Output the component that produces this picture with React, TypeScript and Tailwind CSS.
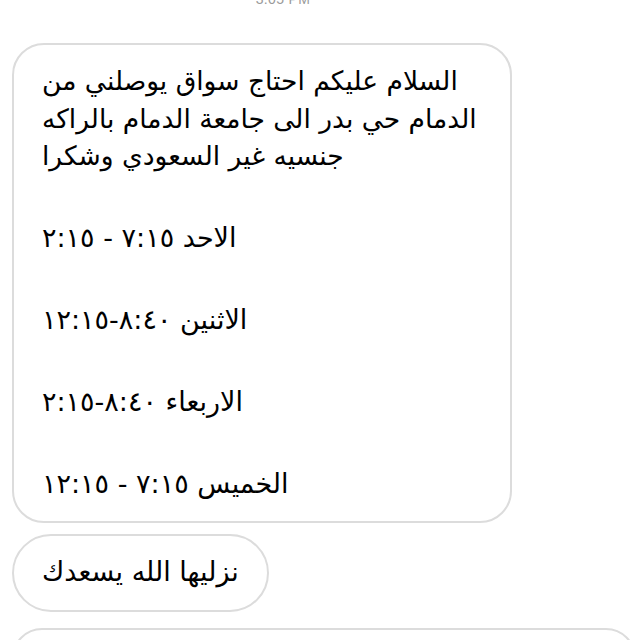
export default function App() {
  const schedule = [
    "الاحد ٧:١٥ - ٢:١٥",
    "الاثنين ٨:٤٠-١٢:١٥",
    "الاربعاء ٨:٤٠-٢:١٥",
    "الخميس ٧:١٥ - ١٢:١٥",
  ];

  return (
    <div className="w-[640px] h-[640px] overflow-hidden bg-white text-black font-['DejaVu_Sans',sans-serif]">
      {/* timestamp, mostly scrolled off the top */}
      <div className="h-[43px] flex justify-center">
        <span className="-mt-[11px] pr-[74px] text-[14px] text-[#9a9a9a] font-['Liberation_Sans',sans-serif] tracking-wide">
          3:05 PM
        </span>
      </div>

      <div className="px-[12px] flex flex-col gap-[11px]">
        {/* long message */}
        <div
          dir="rtl"
          className="w-[500px] border-2 border-[#dcdcdc] rounded-[32px] pt-[17px] pb-[18px] pr-[30px] pl-[28px] text-[26.5px] text-left whitespace-nowrap"
        >
          <p className="leading-[37.5px]">
            السلام عليكم احتاج سواق يوصلني من
            <br />
            الدمام حي بدر الى جامعة الدمام بالراكه
            <br />
            جنسيه غير السعودي وشكرا
          </p>
          {schedule.map((line) => (
            <p key={line} className="mt-[44px] leading-[38px] text-[27px] tracking-[0.5px]">
              {line}
            </p>
          ))}
        </div>

        {/* short reply */}
        <div className="flex">
          <div
            dir="rtl"
            className="h-[78px] flex items-center border-2 border-[#dcdcdc] rounded-full pl-[28px] pr-[28px] text-[27px]"
          >
            نزليها الله يسعدك
          </div>
        </div>

        {/* next bubble, cut off by the bottom edge */}
        <div className="flex justify-end -mr-[8px] mt-[5px]">
          <div className="w-[660px] h-[60px] border-2 border-[#dcdcdc] rounded-[32px]" />
        </div>
      </div>
    </div>
  );
}
